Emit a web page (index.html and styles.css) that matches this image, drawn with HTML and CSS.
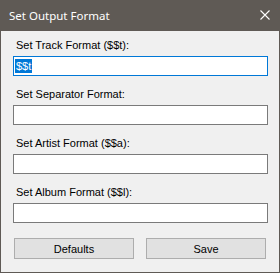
FILE: index.html
```html
<!DOCTYPE html>
<html lang="en">
<head>
  <meta charset="UTF-8" />
  <title>Set Output Format</title>
  <link rel="stylesheet" href="styles.css">
</head>
<body>

  <div class="window">
    <div class="titlebar">
      <span class="title">Set Output Format</span>
      <svg class="close" width="10" height="10" viewBox="0 0 10 10">
        <path d="M0.5 0.5 L9.5 9.5 M9.5 0.5 L0.5 9.5" stroke="#fff" stroke-width="1.1" fill="none" />
      </svg>
    </div>

    <div class="content">
      <div class="field">
        <label>Set Track Format ($$t):</label>
        <div class="textbox focused"><span class="selected">$$t</span></div>
      </div>
      <div class="field">
        <label>Set Separator Format:</label>
        <div class="textbox"></div>
      </div>
      <div class="field">
        <label>Set Artist Format ($$a):</label>
        <div class="textbox"></div>
      </div>
      <div class="field">
        <label>Set Album Format ($$l):</label>
        <div class="textbox"></div>
      </div>

      <div class="buttons">
        <button>Defaults</button>
        <button>Save</button>
      </div>
    </div>
  </div>

</body>
</html>
```

FILE: styles.css
```css
* {
  box-sizing: border-box;
}

body {
  margin: 0;
  padding: 0;
  background-color: #f0f0f0;
  font-family: "Liberation Sans", Arial, sans-serif;
}

.window {
  width: 280px;
  height: 273px;
  display: flex;
  flex-direction: column;
}

.titlebar {
  height: 31px;
  background-color: #5f5a55;
  display: flex;
  align-items: center;
  justify-content: space-between;
  padding: 0 10px 0 9px;
}

.title {
  color: #fff;
  font-family: "Noto Sans", "Open Sans", sans-serif;
  font-size: 11.5px;
  margin-top: -1px;
}

.close {
  display: block;
  margin-top: -1px;
}

.content {
  flex: 1;
  background-color: #f0f0f0;
  border: 1px solid #5f5a55;
  border-top: none;
  padding: 7px 11px 0 12px;
  display: flex;
  flex-direction: column;
}

.field {
  display: flex;
  flex-direction: column;
  margin-bottom: 11px;
}

.field label {
  font-size: 11px;
  line-height: 15px;
  color: #000;
  padding-left: 3px;
  margin-bottom: 3px;
}

.textbox {
  height: 20px;
  background-color: #fff;
  border: 1px solid #7a7a7a;
  padding: 2px 1px;
  font-size: 11px;
  line-height: 14px;
}

.textbox.focused {
  border-color: #0078d7;
}

.selected {
  display: inline-block;
  background-color: #0078d7;
  color: #fff;
  padding: 0 1px;
}

.buttons {
  display: flex;
  gap: 12px;
  padding: 4px 1px 0 1px;
}

.buttons button {
  width: 120px;
  height: 21px;
  background-color: #e1e1e1;
  border: 1px solid #adadad;
  font-family: "Liberation Sans", Arial, sans-serif;
  font-size: 11px;
  color: #000;
  padding: 0;
}
```
